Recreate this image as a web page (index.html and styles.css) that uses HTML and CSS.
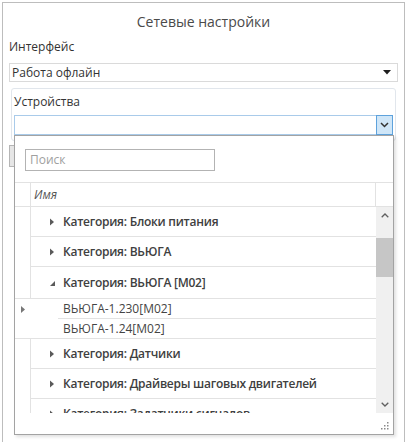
FILE: index.html
```html
<!DOCTYPE html>
<html>
<head>
<meta charset="utf-8">
<link rel="stylesheet" href="styles.css">
</head>
<body>
<div class="window">
  <div class="title">Сетевые настройки</div>
  <div class="label">Интерфейс</div>
  <div class="combo">
    <span>Работа офлайн</span>
    <svg class="drop" width="8" height="5" viewBox="0 0 8 5"><polygon points="0,0 8,0 4,4.5" fill="#1e1e1e"/></svg>
  </div>
  <div class="group">
    <div class="glabel">Устройства</div>
    <div class="dcombo">
      <div class="dbtn">
        <svg width="9" height="6" viewBox="0 0 9 6"><polyline points="1,1 4.5,4.5 8,1" fill="none" stroke="#333" stroke-width="1.5"/></svg>
      </div>
    </div>
  </div>
  <div class="backbtn"></div>

  <div class="popup">
    <div class="search">Поиск</div>
    <div class="grid">
      <div class="ghead">
        <div class="rh"></div>
        <div class="hname">Имя</div>
        <div class="hsb"></div>
      </div>
      <div class="gbody">
        <div class="rows">
          <div class="row cat">
            <div class="rhc"></div>
            <div class="cell"><svg class="tri" width="5" height="8" viewBox="0 0 5 8"><polygon points="0,0.5 4,4 0,7.5" fill="#5a5a5a"/></svg><span>Категория: Блоки питания</span></div>
          </div>
          <div class="row cat">
            <div class="rhc"></div>
            <div class="cell"><svg class="tri" width="5" height="8" viewBox="0 0 5 8"><polygon points="0,0.5 4,4 0,7.5" fill="#5a5a5a"/></svg><span>Категория: ВЬЮГА</span></div>
          </div>
          <div class="row cat open">
            <div class="rhc"></div>
            <div class="cell"><svg class="tri" width="5" height="8" viewBox="0 0 5 8"><polygon points="5,2 5,7 0,7" fill="#5a5a5a"/></svg><span>Категория: ВЬЮГА [M02]</span></div>
          </div>
          <div class="row child">
            <div class="rhc"><svg width="4" height="7" viewBox="0 0 4 7"><polygon points="0,0 4,3.5 0,7" fill="#777"/></svg></div>
            <div class="gap"></div>
            <div class="cell">ВЬЮГА-1.230[M02]</div>
          </div>
          <div class="row child last">
            <div class="rhc"></div>
            <div class="gap"></div>
            <div class="cell">ВЬЮГА-1.24[M02]</div>
          </div>
          <div class="row cat">
            <div class="rhc"></div>
            <div class="cell"><svg class="tri" width="5" height="8" viewBox="0 0 5 8"><polygon points="0,0.5 4,4 0,7.5" fill="#5a5a5a"/></svg><span>Категория: Датчики</span></div>
          </div>
          <div class="row cat">
            <div class="rhc"></div>
            <div class="cell"><svg class="tri" width="5" height="8" viewBox="0 0 5 8"><polygon points="0,0.5 4,4 0,7.5" fill="#5a5a5a"/></svg><span>Категория: Драйверы шаговых двигателей</span></div>
          </div>
          <div class="row cat">
            <div class="rhc"></div>
            <div class="cell"><svg class="tri" width="5" height="8" viewBox="0 0 5 8"><polygon points="0,0.5 4,4 0,7.5" fill="#5a5a5a"/></svg><span>Категория: Задатчики сигналов</span></div>
          </div>
        </div>
        <div class="vscroll">
          <div class="sarrow">
            <svg width="8" height="5" viewBox="0 0 8 5"><polyline points="0.7,4.3 4,1 7.3,4.3" fill="none" stroke="#606060" stroke-width="1.3"/></svg>
          </div>
          <div class="thumb"></div>
          <div class="sfill"></div>
          <div class="sarrow">
            <svg width="8" height="5" viewBox="0 0 8 5"><polyline points="0.7,0.7 4,4 7.3,0.7" fill="none" stroke="#606060" stroke-width="1.3"/></svg>
          </div>
        </div>
      </div>
    </div>
    <div class="pfoot">
      <svg class="grip" width="8" height="8" viewBox="0 0 8 8">
        <rect x="6" y="0" width="1.5" height="1.5" fill="#8a8a8a"/>
        <rect x="3" y="3" width="1.5" height="1.5" fill="#8a8a8a"/>
        <rect x="6" y="3" width="1.5" height="1.5" fill="#8a8a8a"/>
        <rect x="0" y="6" width="1.5" height="1.5" fill="#8a8a8a"/>
        <rect x="3" y="6" width="1.5" height="1.5" fill="#8a8a8a"/>
        <rect x="6" y="6" width="1.5" height="1.5" fill="#8a8a8a"/>
      </svg>
    </div>
  </div>
</div>
</body>
</html>
```

FILE: styles.css
```css
html, body {
  margin: 0;
  padding: 0;
  background: #ffffff;
  overflow: hidden;
}

body {
  font-family: "Open Sans", "Noto Sans", "Liberation Sans", sans-serif;
  color: #444444;
  font-size: 12px;
}

.window {
  position: relative;
  box-sizing: border-box;
  margin: 2px 0 0 2px;
  width: 403px;
  height: 440px;
  border: 1px solid #bdbdbd;
  border-bottom: none;
  padding: 0 6px;
}

.title {
  margin-top: 9px;
  line-height: 20px;
  font-size: 14px;
  text-align: center;
  color: #4a4a4a;
}

.label {
  margin-top: 6px;
  line-height: 18px;
  font-size: 12px;
  color: #333333;
}

.combo {
  margin-top: 7px;
  box-sizing: border-box;
  height: 19px;
  border: 1px solid #dadada;
  display: flex;
  align-items: center;
  justify-content: space-between;
  padding: 0 6px 0 2px;
  font-size: 12px;
  color: #333333;
}

.drop {
  display: block;
}

.group {
  margin: 6px 2px 0;
  box-sizing: border-box;
  height: 53px;
  border: 1px solid #e1e6ec;
  border-radius: 3px;
  padding: 4px 2px 0;
}

.glabel {
  line-height: 18px;
  font-size: 12px;
  color: #333333;
}

.dcombo {
  margin-top: 4px;
  box-sizing: border-box;
  height: 20px;
  border: 1px solid #a9cbea;
  display: flex;
  justify-content: flex-end;
}

.dbtn {
  box-sizing: border-box;
  width: 17px;
  margin: -1px -1px -1px 0;
  border: 1px solid #5ea2dc;
  background: #cfe6f8;
  display: flex;
  align-items: center;
  justify-content: center;
}

.dbtn svg {
  display: block;
}

.backbtn {
  margin-top: 4px;
  box-sizing: border-box;
  width: 30px;
  height: 22px;
  background: #e6e6e6;
  border: 1px solid #b5b5b5;
}

.popup {
  position: absolute;
  left: 11px;
  top: 132px;
  box-sizing: border-box;
  width: 380px;
  height: 300px;
  border: 1px solid #a3a3a3;
  background: #ffffff;
  box-shadow: 2px 2px 3px rgba(0, 0, 0, 0.12);
  display: flex;
  flex-direction: column;
}

.search {
  margin: 13px 0 0 10px;
  box-sizing: border-box;
  width: 190px;
  height: 22px;
  border: 1px solid #b3b3b3;
  padding-left: 4px;
  line-height: 20px;
  font-size: 12px;
  color: #a0a0a0;
}

.grid {
  margin-top: 11px;
  border-top: 1px solid #e2e2e2;
  display: flex;
  flex-direction: column;
}

.ghead {
  display: flex;
  box-sizing: border-box;
  height: 24px;
  border-bottom: 1px solid #e2e2e2;
}

.rh {
  box-sizing: border-box;
  width: 16px;
  border-right: 1px solid #e2e2e2;
}

.hname {
  flex: 1;
  padding-left: 3px;
  line-height: 24px;
  font-size: 12px;
  font-style: italic;
  color: #555555;
}

.hsb {
  box-sizing: border-box;
  width: 18px;
  border-left: 1px solid #e2e2e2;
}

.gbody {
  display: flex;
  height: 206px;
  overflow: hidden;
}

.rows {
  flex: 1;
  overflow: hidden;
}

.row {
  display: flex;
  height: 30px;
}

.row.open {
  height: 32px;
}

.row.child {
  height: 20px;
}

.rhc {
  box-sizing: border-box;
  width: 16px;
  flex: none;
  display: flex;
  align-items: center;
  justify-content: center;
}

.cat .rhc {
  border-right: 1px solid #e2e2e2;
}

.open .rhc,
.child.last .rhc,
.child.last .gap {
  border-bottom: 1px solid #e2e2e2;
}

.gap {
  box-sizing: border-box;
  width: 27px;
  flex: none;
}

.cell {
  flex: 1;
  box-sizing: border-box;
  border-bottom: 1px solid #e2e2e2;
  display: flex;
  align-items: center;
  font-size: 12px;
  color: #444444;
  white-space: nowrap;
}

.cat .cell {
  padding-left: 19px;
  font-weight: 600;
  letter-spacing: -0.25px;
  color: #404040;
}

.child .cell {
  padding-left: 5px;
}

.tri {
  display: block;
  margin-right: 8px;
  flex: none;
}

.vscroll {
  width: 17px;
  flex: none;
  background: #f0f0f0;
  display: flex;
  flex-direction: column;
}

.sarrow {
  height: 17px;
  flex: none;
  display: flex;
  align-items: center;
  justify-content: center;
}

.sarrow svg {
  display: block;
}

.thumb {
  margin-top: 14px;
  height: 39px;
  flex: none;
  background: #c6c6c6;
}

.sfill {
  flex: 1;
}

.pfoot {
  flex: 1;
  display: flex;
  justify-content: flex-end;
  align-items: flex-end;
  padding: 0 4px 4px 0;
}

.grip {
  display: block;
}
```
